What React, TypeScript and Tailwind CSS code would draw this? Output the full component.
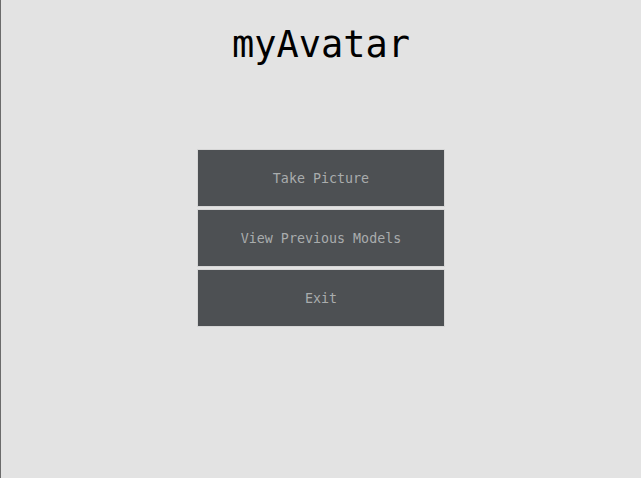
export default function App() {
  const items = ["Take Picture", "View Previous Models", "Exit"];
  return (
    <div className="flex h-[478px] w-[641px] flex-col items-center border-l border-[#6b6b6b] bg-[#e3e3e3] font-['DejaVu_Sans_Mono',monospace]">
      <h1 className="mt-[24px] text-[37px] leading-[42px] text-black">myAvatar</h1>
      <div className="mt-[83px] flex flex-col gap-[2px]">
        {items.map((label) => (
          <div key={label} className="border border-[#d6d6d6] p-0">
            <button className="flex h-[56px] w-[246px] items-center justify-center bg-[#4d5053] pt-[2px] text-[13.33px] text-[#a9acad]">
              {label}
            </button>
          </div>
        ))}
      </div>
    </div>
  );
}
